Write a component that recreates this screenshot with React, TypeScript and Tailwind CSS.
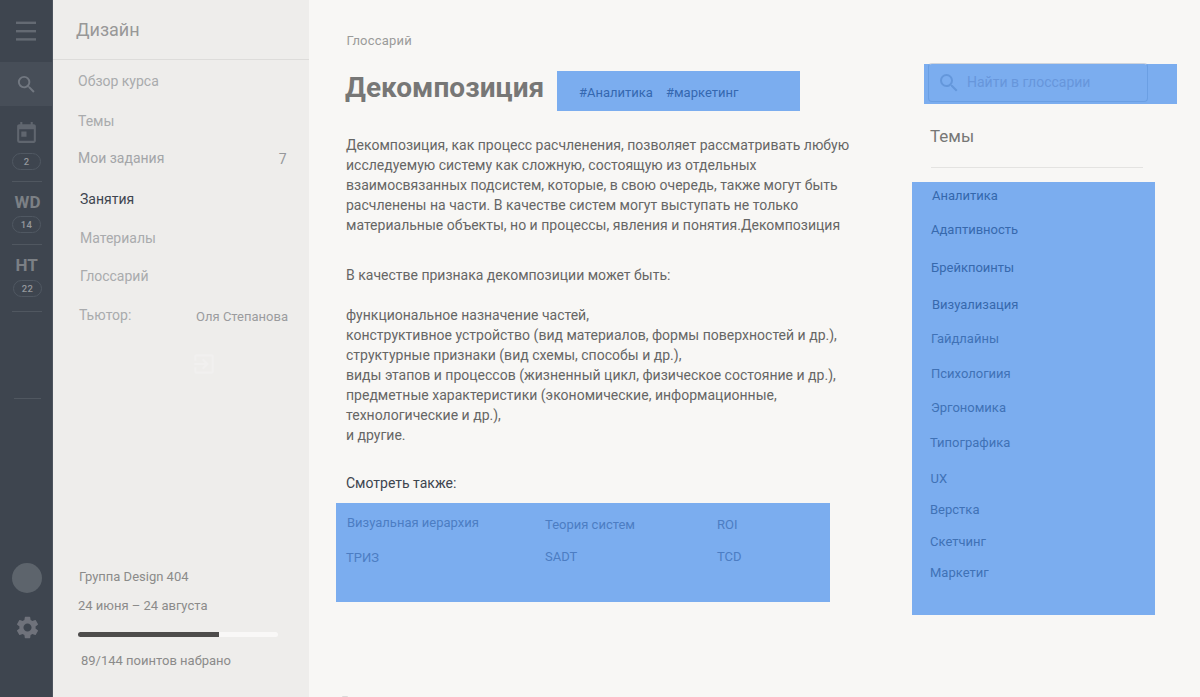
import { MdExitToApp, MdSearch, MdSettings, MdToday } from 'react-icons/md';

const courseLinks = [
  { label: 'Обзор курса', cls: 'pl-[25px] text-[#a9abad]' },
  { label: 'Темы', cls: 'mt-5 pl-[25px] text-[#a9abad]' },
  { label: 'Мои задания', count: '7', cls: 'mt-[17px] pl-[25px] text-[#a3a5a8]' },
  { label: 'Занятия', cls: 'mt-[21px] pl-[27px] text-[#3e454f]' },
  { label: 'Материалы', cls: 'mt-[19px] pl-[27px] text-[#a9abad]' },
  { label: 'Глоссарий', cls: 'mt-[18px] pl-[27px] text-[#a9abad]' },
];

const topics = [
  { label: 'Аналитика', cls: 'pl-5 text-[#3468ad]' },
  { label: 'Адаптивность', cls: 'mt-[14px] pl-[19px] text-[#3769ad]' },
  { label: 'Брейкпоинты', cls: 'mt-[18px] pl-[19px] text-[#3769ad]' },
  { label: 'Визуализация', cls: 'mt-[17px] pl-[20px] text-[#3769ad]' },
  { label: 'Гайдлайны', cls: 'mt-[14px] pl-[19px] text-[#4072b6]' },
  { label: 'Психологиия', cls: 'mt-[15px] pl-[19px] text-[#4072b6]' },
  { label: 'Эргономика', cls: 'mt-[14px] pl-[19px] text-[#4072b6]' },
  { label: 'Типографика', cls: 'mt-[15px] pl-[18px] text-[#4072b6]' },
  { label: 'UX', cls: 'mt-4 pl-[18.5px] text-[#4072b6]' },
  { label: 'Верстка', cls: 'mt-[11px] pl-[18px] text-[#4072b6]' },
  { label: 'Скетчинг', cls: 'mt-3 pl-[18px] text-[#4072b6]' },
  { label: 'Маркетиг', cls: 'mt-[11px] pl-[18px] text-[#4072b6]' },
];

function Badge({ children, className }: { children: string; className: string }) {
  return (
    <span className={`flex h-[17px] w-[29px] items-center justify-center rounded-full border border-[#505862] pt-px text-[9.5px] leading-none font-medium tracking-[0.3px] text-[#94979c] ${className}`}>
      {children}
    </span>
  );
}

function Rail() {
  return (
    <nav className="flex w-[53px] shrink-0 flex-col border-r border-[#4d545e] bg-[#3e454f]">
      <button className="flex h-[62px] items-start pt-[21px] pl-4">
        <svg className="h-[21px] w-5 fill-[#646a73]" viewBox="0 0 20 21">
          <rect y="0.6" width="20" height="2.4" />
          <rect y="9" width="20" height="2.4" />
          <rect y="17.2" width="20" height="2.4" />
        </svg>
      </button>
      <button className="flex h-11 items-start bg-[#474e58] pt-[11px] pl-[15px]">
        <MdSearch className="size-[23px] text-[#727881]" />
      </button>
      <div className="flex h-[75px] flex-col pt-[15px] pl-3">
        <MdToday className="ml-[2px] size-[25px] text-[#60666f]" />
        <Badge className="mt-[7px]">2</Badge>
      </div>
      <div className="ml-3 flex h-[63px] w-[30px] flex-col border-t border-[#505760] pt-[10px]">
        <span className="pl-[2.5px] text-[17px] leading-5 font-bold text-[#7c8085]">WD</span>
        <Badge className="mt-1">14</Badge>
      </div>
      <div className="ml-3 flex h-[67px] w-[30px] flex-col border-t border-[#505760] pt-[10px]">
        <span className="pl-[3.5px] text-[17px] leading-5 font-bold text-[#7c8085]">HT</span>
        <Badge className="mt-[5px] ml-px">22</Badge>
      </div>
      <div className="ml-3 h-[87px] w-[30px] border-t border-[#505760]" />
      <div className="ml-[14px] w-[27px] border-t border-[#505760]" />
      <div className="mt-auto mb-[56px] flex flex-col pl-3">
        <span className="size-[30px] rounded-full bg-[#5d646c]" />
        <MdSettings className="mt-[21px] ml-[1.5px] size-[27px] text-[#6f727b]" />
      </div>
    </nav>
  );
}

function CoursePanel() {
  return (
    <aside className="flex w-64 shrink-0 flex-col bg-[#eeedeb] text-sm leading-5">
      <h2 className="h-[60px] border-b border-[#dddcda] pt-5 pl-[23px] text-[18px] leading-5 text-[#989898]">Дизайн</h2>
      <ul className="pt-[11px]">
        {courseLinks.map((l) => (
          <li key={l.label} className={`flex h-5 justify-between pr-[22.5px] ${l.cls}`}>
            {l.label}
            {l.count && <span className="mt-px text-[#96989b]">{l.count}</span>}
          </li>
        ))}
      </ul>
      <div className="mt-[19px] flex h-5 justify-between pr-[21px] pl-[26px] text-[#a9abad]">
        Тьютор:
        <span className="mt-[2px] text-[13px] text-[#9b9c9e]">Оля Степанова</span>
      </div>
      <MdExitToApp className="mt-[26px] ml-[138px] size-[26px] text-[#f1f0ef]" />
      <div className="mt-auto pb-[26px] pl-[25px] text-[13px] text-[#8b8b8a]">
        <p className="pl-px">Группа Design 404</p>
        <p className="mt-[9px]">24 июня – 24 августа</p>
        <div className="mt-4 h-[5px] w-[200px] overflow-hidden rounded-full bg-[#f9f8f7]">
          <div className="h-full w-[141px] bg-[#4d4c4b]" />
        </div>
        <p className="mt-[14px] pl-[3px]">89/144 поинтов набрано</p>
      </div>
    </aside>
  );
}

function Article() {
  return (
    <article className="flex w-[521px] shrink-0 flex-col pl-[27px] text-sm leading-5 text-[#666665]">
      <p className="mt-[31px] pl-[10.5px] text-[13px] tracking-[0.2px] text-[#9b9b9a]">Глоссарий</p>
      <div className="mt-5 flex h-10">
        <h1 className="w-[221px] pt-px pl-[9px] text-[28px] leading-8 font-bold tracking-[0.05px] text-[#777776]">Декомпозиция</h1>
        <div className="flex w-[243px] gap-[13px] bg-[#7badef] pt-3 pl-[22px] text-[13px] text-[#3568b0]">
          <span>#Аналитика</span>
          <span>#маркетинг</span>
        </div>
      </div>
      <p className="mt-6 pl-[10px] tracking-[0.01px] whitespace-nowrap">
        Декомпозиция, как процесс расчленения, позволяет рассматривать любую<br />
        исследуемую систему как сложную, состоящую из отдельных<br />
        взаимосвязанных подсистем, которые, в свою очередь, также могут быть<br />
        расчленены на части. В качестве систем могут выступать не только<br />
        материальные объекты, но и процессы, явления и понятия.Декомпозиция
      </p>
      <p className="mt-[30px] pl-[10px]">В качестве признака декомпозиции может быть:</p>
      <p className="mt-5 pl-[10px] tracking-[0.01px] whitespace-nowrap">
        функциональное назначение частей,<br />
        конструктивное устройство (вид материалов, формы поверхностей и др.),<br />
        структурные признаки (вид схемы, способы и др.),<br />
        виды этапов и процессов (жизненный цикл, физическое состояние и др.),<br />
        предметные характеристики (экономические, информационные,<br />
        технологические и др.),<br />
        и другие.
      </p>
      <h3 className="mt-7 pl-[10px] text-[#3e454f]">Смотреть также:</h3>
      <div className="mt-[10px] grid h-[99px] w-[494px] grid-cols-[198px_172px_1fr] content-start gap-y-[13px] bg-[#7badef] pt-[10px] pl-[11px] text-[13px] text-[#4c7dc3]">
        <span>Визуальная иерархия</span>
        <span className="mt-[2px]">Теория систем</span>
        <span className="mt-[2px]">ROI</span>
        <span className="-ml-px">ТРИЗ</span>
        <span className="-mt-px">SADT</span>
        <span className="-mt-px">TCD</span>
      </div>
      <div className="mt-auto ml-[6px] h-px w-[6px] rounded-t-full bg-[#dcdbda]" />
    </article>
  );
}

function Topics() {
  return (
    <section className="ml-[82px] flex w-[265px] flex-col leading-5">
      <div className="mt-16 ml-3 h-10 w-[253px] bg-[#7badef] pl-1">
        <label className="-mt-px flex h-[39px] w-[220px] items-start rounded-[4px] border border-[#6b9fe3] border-t-[#cfd4dc] pt-2 pl-2 text-[#6796db]">
          <MdSearch className="-mt-px size-6 shrink-0 text-[#6497db]" />
          <span className="ml-[6px] text-sm leading-5">Найти в глоссарии</span>
        </label>
      </div>
      <h2 className="mt-[22px] pl-[18px] text-[17px] text-[#777776]">Темы</h2>
      <hr className="mt-[21px] ml-[19px] w-[212px] border-[#e4e3e1]" />
      <ul className="mt-[14px] h-[433px] w-[243px] bg-[#7badef] pt-1 text-[13px]">
        {topics.map((t) => (
          <li key={t.label} className={`h-5 ${t.cls}`}>{t.label}</li>
        ))}
      </ul>
    </section>
  );
}

export default function App() {
  return (
    <div className="flex h-[697px] w-[1200px] overflow-hidden bg-[#f8f7f5] font-['Roboto','Liberation_Sans',sans-serif]">
      <Rail />
      <CoursePanel />
      <Article />
      <Topics />
    </div>
  );
}
